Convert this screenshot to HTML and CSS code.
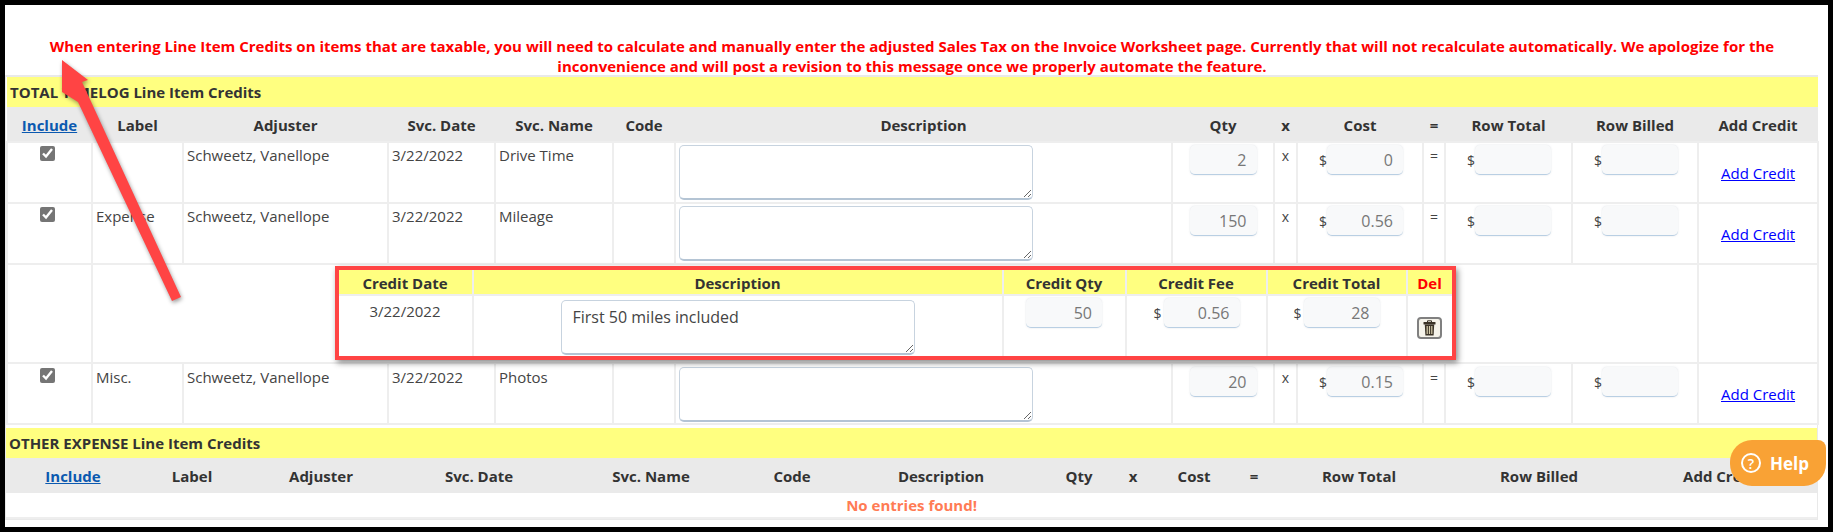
FILE: index.html
```html
<!DOCTYPE html>
<html lang="en">
<head>
<meta charset="utf-8">
<title>Line Item Credits</title>
<link rel="stylesheet" href="styles.css">
</head>
<body>
<div class="frame">
  <p class="notice">When entering Line Item Credits on items that are taxable, you will need to calculate and manually enter the adjusted Sales Tax on the Invoice Worksheet page. Currently that will not recalculate automatically. We apologize for the inconvenience and will post a revision to this message once we properly automate the feature.</p>
  <div class="panel">
    <table class="grid main">
      <colgroup>
        <col class="m1"><col class="m2"><col class="m3"><col class="m4"><col class="m5"><col class="m6"><col class="m7"><col class="m8"><col class="m9"><col class="m10"><col class="m11"><col class="m12"><col class="m13"><col class="m14">
      </colgroup>
      <tr class="band"><td colspan="14">TOTAL TIMELOG Line Item Credits</td></tr>
      <tr class="head">
        <th><a href="#">Include</a></th><th>Label</th><th>Adjuster</th><th>Svc. Date</th><th>Svc. Name</th><th>Code</th><th>Description</th><th>Qty</th><th>x</th><th>Cost</th><th>=</th><th>Row Total</th><th>Row Billed</th><th>Add Credit</th>
      </tr>
      <tr class="row">
        <td class="center"><input type="checkbox" checked></td><td></td><td>Schweetz, Vanellope</td><td>3/22/2022</td><td>Drive Time</td><td></td>
        <td><textarea class="desc"></textarea></td>
        <td class="center"><input class="num qty" value="2" readonly></td><td class="center op">x</td>
        <td><span class="money"><span>$</span><input class="num" value="0" readonly></span></td><td class="center op eq">=</td>
        <td><span class="money"><span>$</span><input class="num" readonly></span></td>
        <td><span class="money"><span>$</span><input class="num" readonly></span></td>
        <td class="center add"><a href="#">Add Credit</a></td>
      </tr>
      <tr class="row">
        <td class="center"><input type="checkbox" checked></td><td>Expense</td><td>Schweetz, Vanellope</td><td>3/22/2022</td><td>Mileage</td><td></td>
        <td><textarea class="desc"></textarea></td>
        <td class="center"><input class="num qty" value="150" readonly></td><td class="center op">x</td>
        <td><span class="money"><span>$</span><input class="num" value="0.56" readonly></span></td><td class="center op eq">=</td>
        <td><span class="money"><span>$</span><input class="num" readonly></span></td>
        <td><span class="money"><span>$</span><input class="num" readonly></span></td>
        <td class="center add"><a href="#">Add Credit</a></td>
      </tr>
      <tr class="credit-row">
        <td></td>
        <td colspan="12" class="credit-cell">
          <div class="credit-box">
            <table class="grid credit">
              <colgroup><col class="c1"><col class="c2"><col class="c3"><col class="c4"><col class="c5"><col class="c6"></colgroup>
              <tr class="credit-head"><th>Credit Date</th><th>Description</th><th>Credit Qty</th><th>Credit Fee</th><th>Credit Total</th><th class="del">Del</th></tr>
              <tr class="credit-body">
                <td class="center date">3/22/2022</td>
                <td class="center"><textarea class="desc">First 50 miles included</textarea></td>
                <td class="center"><input class="num" value="50" readonly></td>
                <td><span class="money wide"><span>$</span><input class="num" value="0.56" readonly></span></td>
                <td><span class="money wide"><span>$</span><input class="num" value="28" readonly></span></td>
                <td class="center">
                  <button class="trash" type="button" aria-label="Delete">
                    <svg width="13" height="16" viewBox="0 0 13 16"><path d="M4.5 2V.8h4V2" fill="none" stroke="#3a3226" stroke-width="1"/><rect x="0.5" y="2" width="12" height="2.4" rx=".5" fill="#3a3226"/><path d="M1.8 4.4h9.4l-.6 11H2.4z" fill="#3a3226"/><path d="M4.2 6v8M6.5 6v8M8.8 6v8" stroke="#d8cfae" stroke-width="1.2"/></svg>
                  </button>
                </td>
              </tr>
            </table>
          </div>
        </td>
        <td></td>
      </tr>
      <tr class="row">
        <td class="center"><input type="checkbox" checked></td><td>Misc.</td><td>Schweetz, Vanellope</td><td>3/22/2022</td><td>Photos</td><td></td>
        <td><textarea class="desc"></textarea></td>
        <td class="center"><input class="num qty" value="20" readonly></td><td class="center op">x</td>
        <td><span class="money"><span>$</span><input class="num" value="0.15" readonly></span></td><td class="center op eq">=</td>
        <td><span class="money"><span>$</span><input class="num" readonly></span></td>
        <td><span class="money"><span>$</span><input class="num" readonly></span></td>
        <td class="center add"><a href="#">Add Credit</a></td>
      </tr>
    </table>
    <table class="grid other">
      <colgroup>
        <col class="o1"><col class="o2"><col class="o3"><col class="o4"><col class="o5"><col class="o6"><col class="o7"><col class="o8"><col class="o9"><col class="o10"><col class="o11"><col class="o12"><col class="o13"><col class="o14">
      </colgroup>
      <tr class="band"><td colspan="14">OTHER EXPENSE Line Item Credits</td></tr>
      <tr class="head">
        <th><a href="#">Include</a></th><th>Label</th><th>Adjuster</th><th>Svc. Date</th><th>Svc. Name</th><th>Code</th><th>Description</th><th>Qty</th><th>x</th><th>Cost</th><th>=</th><th>Row Total</th><th>Row Billed</th><th>Add Credit</th>
      </tr>
      <tr class="empty"><td colspan="14">No entries found!</td></tr>
    </table>
  </div>
  <svg class="arrow" width="200" height="310" viewBox="5 5 200 310" aria-hidden="true">
    <path d="M62 60 L88 80 L82 82 L181 297 L172 301 L78 102 L62 92 Z" fill="#ff4444"/>
  </svg>
  <div class="help"><span class="help-icon">?</span><span>Help</span></div>
</div>
</body>
</html>
```
FILE: styles.css
```css
* { box-sizing: border-box; }
html, body { margin: 0; padding: 0; }
body { font-family: "Open Sans", sans-serif; font-size: 15px; color: #333; background: #000; }
a { color: #00f; }
.frame { position: relative; width: 1833px; height: 532px; border: 5px solid #000; background: #fff; padding: 0 10px 0 1px; overflow: hidden; }
.notice { margin: 0; padding: 31px 30px 0; height: 70px; text-align: center; color: #f00; font-weight: 700; font-size: 15px; line-height: 20px; }
.panel { border: 1px solid #e9e9e9; border-top-width: 2px; width: 1813px; margin-left: -1px; height: 445px; }
.grid { border-collapse: collapse; table-layout: fixed; }
.main, .other { width: 1811px; }
.main td, .main th, .other td, .other th { padding: 0; }
.m1 { width: 85px; } .m2 { width: 91px; } .m3 { width: 205px; } .m4 { width: 107px; } .m5 { width: 118px; } .m6 { width: 62px; } .m7 { width: 497px; } .m8 { width: 102px; } .m9 { width: 23px; } .m10 { width: 126px; } .m11 { width: 22px; } .m12 { width: 127px; } .m13 { width: 126px; } .m14 { width: 120px; }
.o1 { width: 134px; } .o2 { width: 104px; } .o3 { width: 154px; } .o4 { width: 162px; } .o5 { width: 182px; } .o6 { width: 100px; } .o7 { width: 198px; } .o8 { width: 78px; } .o9 { width: 30px; } .o10 { width: 92px; } .o11 { width: 28px; } .o12 { width: 182px; } .o13 { width: 178px; } .o14 { width: 189px; }
.main .band td, .other .band td { height: 30px; background: #ffff80; font-weight: 700; color: #333; padding: 0 3px; vertical-align: middle; }
.main .head th, .other .head th { height: 35px; padding-top: 1px; background: #eaeaea; font-weight: 700; color: #333; text-align: center; vertical-align: middle; }
.head a { color: #0b59b0; }
.row td, .credit-row > td { border: 2px solid #eee; vertical-align: top; color: #444; }
.main .row td { height: 61px; padding: 2px 3px 0; line-height: 21px; }
.main .credit-row + .row td { padding-top: 3px; }
.credit-row > td { height: 99px; }
.main .credit-cell { padding: 1px 0 0; }
.center { text-align: center; }
.row input[type="checkbox"] { width: 15px; height: 15px; margin: 1px 4px 0 0; accent-color: #757575; display: inline-block; }
textarea.desc { display: block; width: 354px; height: 55px; margin: 0; padding: 5px 11px; font: 16px/22px "Open Sans", sans-serif; color: #444; background: #fff; border: 1px solid #c7d3df; border-bottom: 2px solid #b4c4d4; border-radius: 5px; }
.num { width: 76px; height: 30px; margin: 0; padding: 0 10px; border: 0; border-bottom: 1px solid #b9cfe3; border-radius: 5px; background: #f8f9fa; box-shadow: 0 0 2px rgba(160, 170, 180, .35); font: 16px "Open Sans", sans-serif; color: #777; text-align: right; outline: none; }
.qty { width: 67px; }
.op { font-size: 14px; }
.money { display: flex; align-items: center; padding-left: 18px; }
.money span { flex: none; width: 8px; color: #444; font-size: 14px; }
.main .row td.add { padding-top: 20px; }
.credit-box { position: relative; width: 1121px; height: 94px; margin: 0 auto; border: 4px solid #ff4444; box-shadow: 2px 3px 6px rgba(0, 0, 0, .45); }
.credit { width: 1113px; }
.c1 { width: 134px; } .c2 { width: 530px; } .c3 { width: 123px; } .c4 { width: 141px; } .c5 { width: 140px; } .c6 { width: 45px; }
.credit-head th { height: 25px; background: #ffff80; border-right: 2px solid #eee; border-bottom: 2px solid #eee; color: #333; font-weight: 700; padding: 1px 0 0; }
.credit-head th:last-child, .credit-body td:last-child { border-right: 0; }
.credit-body td { height: 61px; padding: 2px 0 0; border-right: 2px solid #eee; vertical-align: top; color: #444; line-height: 19px; }
.credit-body td.date { padding-top: 6px; }
.credit-body textarea.desc { margin: 2px auto 0; }
.credit-head .del { color: #f00; }
.credit-body .money { padding-left: 0; justify-content: flex-end; }
.credit-body .money.wide { padding-right: 26px; gap: 2px; }
.trash { display: inline-flex; align-items: center; justify-content: center; width: 25px; height: 22px; margin-top: 19px; padding: 0; background: #f5f3ea; border: 2px solid #808080; border-radius: 4px; }
.empty td { height: 25px; text-align: center; color: #ff7b54; font-weight: 700; border-bottom: 2px solid #eee; }
.arrow { position: absolute; left: 0; top: 0; overflow: visible; filter: drop-shadow(1px 2px 2px rgba(0, 0, 0, .4)); }
.help { position: absolute; left: 1725px; top: 435px; display: flex; align-items: center; gap: 9px; width: 96px; height: 46px; padding-left: 11px; background: #f9a235; border-radius: 22px 8px 22px 22px; color: #fff; font-weight: 700; font-size: 17px; }
.help-icon { display: inline-flex; align-items: center; justify-content: center; width: 20px; height: 20px; border: 2px solid #fff; border-radius: 50%; font-size: 14px; font-weight: 600; }
.other { margin-top: 3px; }
```
